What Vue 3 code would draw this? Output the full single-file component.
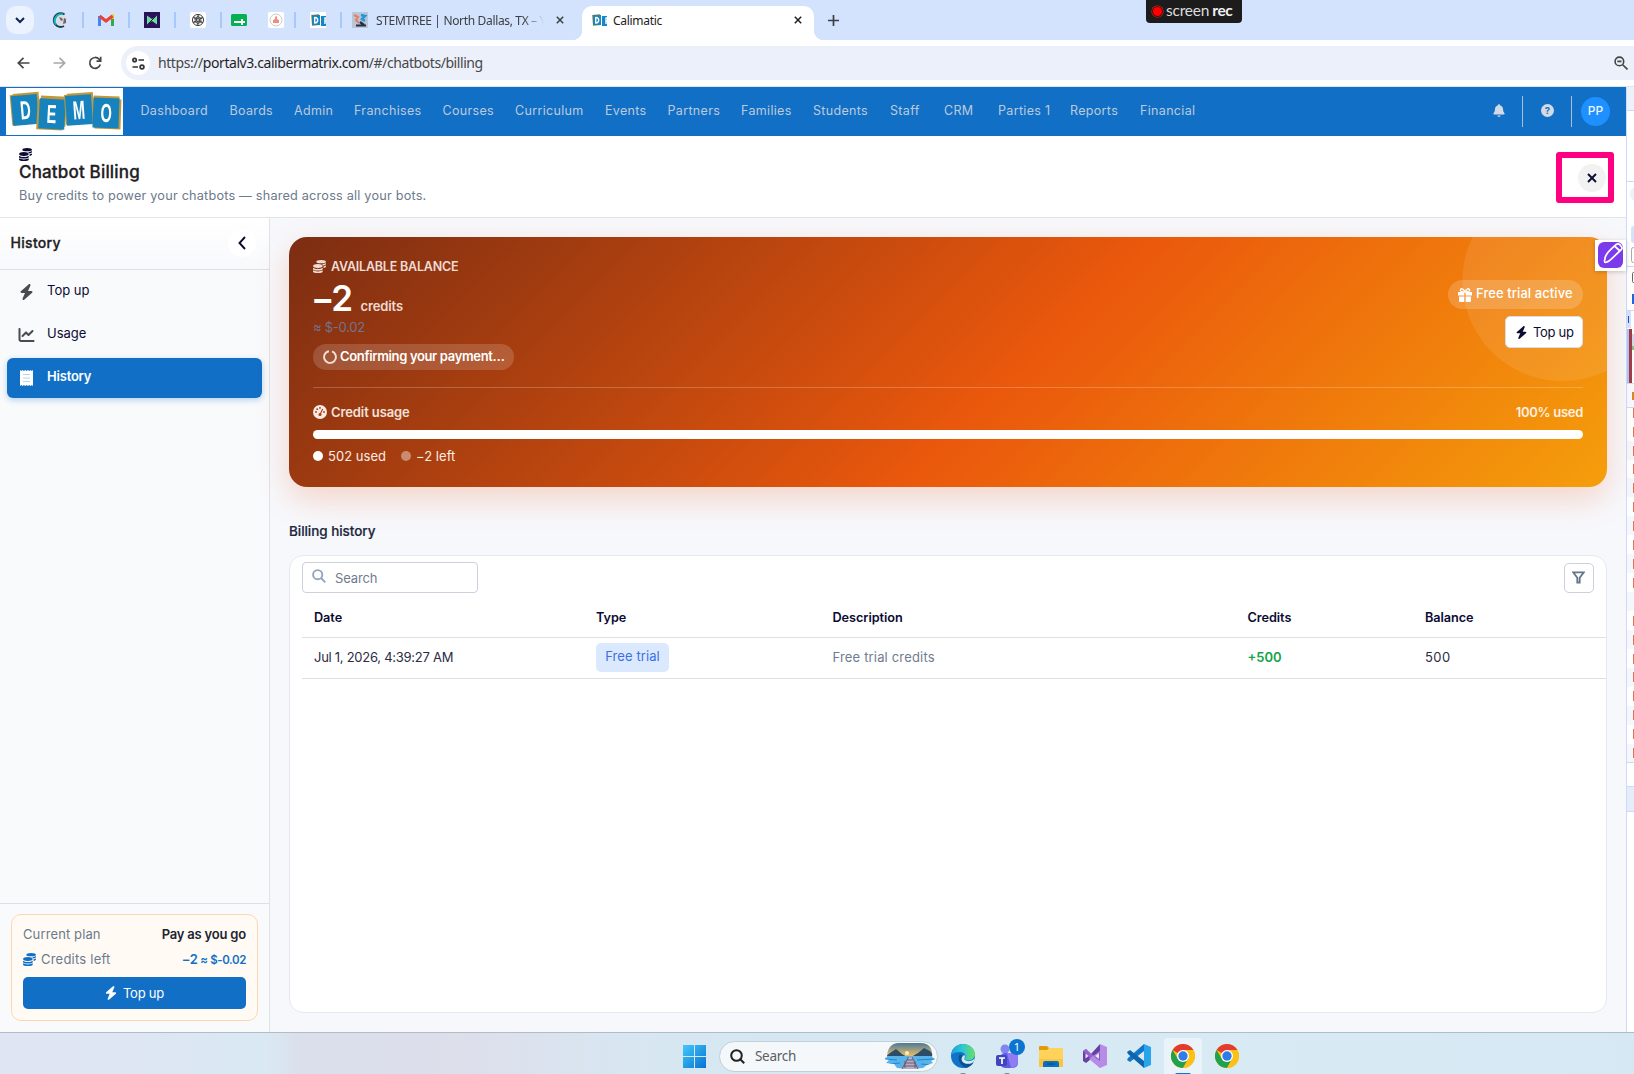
<script setup>
const nav = [
  { t: 'Dashboard', w: 89 }, { t: 'Boards', w: 64.5 }, { t: 'Admin', w: 60 }, { t: 'Franchises', w: 88.5 },
  { t: 'Courses', w: 72.5 }, { t: 'Curriculum', w: 90 }, { t: 'Events', w: 62.5 }, { t: 'Partners', w: 73.5 },
  { t: 'Families', w: 72 }, { t: 'Students', w: 77 }, { t: 'Staff', w: 54 }, { t: 'CRM', w: 54 },
  { t: 'Parties 1', w: 72 }, { t: 'Reports', w: 70 }, { t: 'Financial', w: 60 },
]
const letters = ['D', 'E', 'M', 'O']
const rows = [
  { date: 'Jul 1, 2026, 4:39:27 AM', type: 'Free trial', desc: 'Free trial credits', credits: '+500', balance: '500' },
]
const ticks = [413, 432, 451, 469, 488, 507, 526, 545, 564, 583, 621, 640, 659, 677, 696, 715, 734, 753]
</script>

<template>
  <div class="screen">
    <svg class="defs" width="0" height="0">
      <symbol id="bolt" viewBox="0 0 448 512"><path d="M349.4 44.6c5.9-13.7 1.5-29.7-10.6-38.5s-28.6-8-39.9 1.8l-256 224c-10 8.8-13.6 22.9-8.9 35.3S50.7 288 64 288H175.5L98.6 467.4c-5.9 13.7-1.5 29.7 10.6 38.5s28.6 8 39.9-1.8l256-224c10-8.8 13.6-22.9 8.9-35.3s-16.6-20.7-30-20.7H272.5L349.4 44.6z" /></symbol>
      <symbol id="coins" viewBox="0 0 512 512"><path d="M0 405.3V448c0 35.3 86 64 192 64s192-28.7 192-64v-42.7C342.7 434.4 267.2 448 192 448S41.3 434.4 0 405.3zM320 128c106 0 192-28.7 192-64S426 0 320 0 128 28.7 128 64s86 64 192 64zM0 300.4V352c0 35.3 86 64 192 64s192-28.7 192-64v-51.6c-41.3 34-116.9 51.6-192 51.6S41.3 334.4 0 300.4zm416 11c57.3-11.1 96-31.7 96-55.4v-42.7c-23.2 16.4-57.3 27.6-96 34.5v63.6zM192 160C86 160 0 195.8 0 240s86 80 192 80 192-35.8 192-80-86-80-192-80zm219.3 56.3c60-10.8 100.7-32 100.7-56.3v-42.7c-35.5 25.1-96.5 38.6-160.7 41.8 29.5 14.3 51.2 33.5 60 57.2z" /></symbol>
      <symbol id="cross" viewBox="0 0 10 10"><path d="M1 1l8 8M9 1l-8 8" fill="none" stroke="currentColor" stroke-width="1.9" /></symbol>
      <symbol id="demo-icon" viewBox="0 0 16 16"><path fill="#fff" d="M0 0h16v16H0z" /><path fill="#c39a3a" d="M1 3l8-1 1 11-8 1z" /><path fill="#1687c4" d="M2 3h8v10H2zM11 4h5v10h-5z" /><path d="M4.700 5v6.500M4.700 5.500c4-.5 4 5.500 0 5.500M15 5.500v6.500M14.500 6H16M14.500 9H16" fill="none" stroke="#fff" stroke-width="1.400" /></symbol>
      <symbol id="chrome" viewBox="0 0 24 24"><circle cx="12" cy="12" r="12" fill="#fbc116" /><path fill="#e33b2e" d="M12 12L1.6 6A12 12 0 0 1 22.4 6H12z" /><path fill="#22a04b" d="M12 24A12 12 0 0 1 1.6 6L7 15l5 3 5-3z" /><path fill="#fbc116" d="M12 24a12 12 0 0 0 10.4-18H12l5.2 9z" /><circle cx="12" cy="12" r="6" fill="#fff" /><circle cx="12" cy="12" r="4.7" fill="#2f7bea" /></symbol>
    </svg>

    <!-- browser tabs -->
    <div class="tabs">
      <div class="tab-search"><svg width="10" height="7" viewBox="0 0 10 7"><path d="M1 1l4 4 4-4" fill="none" stroke="#10254f" stroke-width="2" /></svg></div>
      <svg class="fav first" viewBox="0 0 16 16"><path d="M12.500 2.500a6.800 6.800 0 1 0-.5 11.500" fill="none" stroke="#273c49" stroke-width="2" /><path d="M11 2.500a6.500 6.500 0 0 0-7 10" fill="none" stroke="#16b5c5" stroke-width="2" /><circle cx="9.500" cy="8" r="5" fill="#d9dce0" /><path d="M7 5l3 1 1 2-2 1zM12 6l2 1v4l-3 1z" fill="#75665d" /></svg>
      <i class="sep"></i>
      <svg class="fav" viewBox="0 0 16 16"><path fill="#4285f4" d="M0 4h3v10H0z" /><path fill="#34a853" d="M13 4h3v10h-3z" /><path fill="#fbbc04" d="M13 2.5h3V7h-3z" /><path d="M1.5 4L8 9l6.500-5" fill="none" stroke="#ea4335" stroke-width="3.200" /></svg>
      <i class="sep"></i>
      <svg class="fav" viewBox="0 0 16 16"><path fill="#2b1158" d="M0 0h16v16H0z" /><path fill="#66e19a" d="M3 3.500L8 7l5-3.500v9L8 9l-5 3.500z" /><path d="M4 12l8-8" stroke="#2b1158" /></svg>
      <i class="sep"></i>
      <svg class="fav" viewBox="0 0 16 16"><rect width="16" height="16" rx="2" fill="#fff" /><g fill="none" stroke="#444" stroke-width="1"><circle cx="8" cy="8" r="5.600" /><path v-for="a in 6" :key="a" :transform="`rotate(${a * 60} 8 8)`" d="M8 2.500v4l3 1.700v3" /></g></svg>
      <i class="sep"></i>
      <svg class="fav tight" viewBox="0 0 16 16"><rect y="2" width="16" height="12" rx="1.500" fill="#05b050" /><path d="M3 10h11M11 7v6" stroke="#fff" stroke-width="2" /></svg>
      <svg class="fav wide" viewBox="0 0 16 16"><rect width="16" height="16" rx="2" fill="#fff" /><circle cx="8" cy="8" r="6" fill="none" stroke="#bbb" stroke-width=".8" /><path d="M5 11V8l2-1V5l2-1v3l2 1v3z" fill="#f08c80" /></svg>
      <i class="sep short"></i>
      <svg class="fav"><use href="#demo-icon" /></svg>
      <i class="sep"></i>
      <svg class="fav short" viewBox="0 0 16 16"><path fill="#b8c6d6" d="M0 0h16v16H0z" /><path d="M2 3l4 2-2 3 3 3" stroke="#ee7b5d" stroke-width="2" fill="none" /><path d="M9 3l4 1-3 3 3 2" stroke="#2597d4" stroke-width="2.500" fill="none" /><path d="M4 13.500h10M8 10l4 3" stroke="#222e45" stroke-width="2.200" /></svg>
      <div class="tab-title">STEMTREE | North Dallas, TX – Y</div>
      <svg class="x1"><use href="#cross" /></svg>
      <div class="tab-active">
        <svg class="fav"><use href="#demo-icon" /></svg>
        <span>Calimatic</span>
        <svg class="x2"><use href="#cross" /></svg>
      </div>
      <svg class="plus" width="11" height="11" viewBox="0 0 11 11"><path d="M5.500 0v11M0 5.500h11" stroke="#3c4043" stroke-width="1.700" /></svg>
      <div class="rec"><i></i><span>screen</span><b>rec</b></div>
    </div>

    <!-- address bar -->
    <div class="toolbar">
      <svg class="back" width="13" height="12" viewBox="0 0 13 12"><path d="M12.500 6H1.500M6.500 .8L1.300 6l5.200 5.200" fill="none" stroke="#474747" stroke-width="1.700" /></svg>
      <svg class="fwd" width="13" height="12" viewBox="0 0 13 12"><path d="M.5 6h11M6.500 .8L11.700 6l-5.200 5.200" fill="none" stroke="#a8a8a8" stroke-width="1.700" /></svg>
      <svg class="reload" width="14" height="14" viewBox="0 0 14 14"><path d="M12.300 8.500A5.400 5.400 0 1 1 11.200 3.300l1.300 1.500M12.700 .8v4.300H8.500" fill="none" stroke="#474747" stroke-width="1.700" /></svg>
      <div class="omni">
        <div class="site"><svg width="13" height="13" viewBox="0 0 13 13"><g fill="none" stroke="#333" stroke-width="1.700"><circle cx="2.600" cy="3" r="1.700" /><path d="M6.500 3H12M.5 10H6" /><circle cx="10" cy="10" r="1.900" /></g></svg></div>
        <div class="url"><span>https://</span>portalv3.calibermatrix.com<span>/#/chatbots/billing</span></div>
        <svg class="zoomout" width="14" height="14" viewBox="0 0 14 14"><g fill="none" stroke="#444" stroke-width="1.600"><circle cx="5.400" cy="5.400" r="4.300" /><path d="M8.700 8.700l4.800 4.800M3.300 5.400h4.200" /></g></svg>
      </div>
    </div>

    <div class="window">
      <div class="page">
        <!-- application bar -->
        <div class="appbar">
          <div class="logo"><div v-for="(l, i) in letters" :key="l" class="tile" :class="'t' + i"><span>{{ l }}</span></div></div>
          <div class="nav"><span v-for="n in nav" :key="n.t" :style="{ width: n.w + 'px' }">{{ n.t }}</span></div>
          <svg class="bell" width="12" height="13" viewBox="0 0 448 512"><path fill="#d3dae4" d="M224 0c-17.700 0-32 14.300-32 32V51.200C119 66 64 130.600 64 208v18.800c0 47-17.300 92.400-48.500 127.600l-7.400 8.300c-8.400 9.400-10.400 22.900-5.300 34.400S19.400 416 32 416H416c12.600 0 24-7.400 29.200-18.900s3.100-25-5.300-34.400l-7.400-8.300C401.300 319.200 384 273.900 384 226.800V208c0-77.400-55-142-128-156.800V32c0-17.700-14.300-32-32-32zm45.300 493.300c12-12 18.700-28.300 18.700-45.300H160c0 17 6.700 33.300 18.700 45.300s28.300 18.700 45.300 18.700s33.300-6.700 45.300-18.700z" /></svg>
          <i class="bar"></i>
          <div class="help">?</div>
          <i class="bar"></i>
          <div class="avatar">PP</div>
        </div>

        <!-- page heading -->
        <div class="head">
          <div class="head-text">
            <svg class="coin13"><use href="#coins" /></svg>
            <h1>Chatbot Billing</h1>
            <p>Buy credits to power your chatbots — shared across all your bots.</p>
          </div>
          <div class="mark"><div class="close"><svg width="10" height="10"><use href="#cross" /></svg></div></div>
        </div>

        <div class="body">
          <div class="side">
            <div class="side-head"><b>History</b><div class="collapse"><svg width="8" height="14" viewBox="0 0 8 14"><path d="M7 1L1.500 7 7 13" fill="none" stroke="#0b0b28" stroke-width="1.900" /></svg></div></div>
            <div class="menu">
              <div class="item"><svg width="16" height="16"><use href="#bolt" /></svg><span>Top up</span></div>
              <div class="item"><svg width="17" height="16" viewBox="0 0 512 512"><path d="M64 64c0-17.700-14.300-32-32-32S0 46.300 0 64V400c0 44.200 35.800 80 80 80H480c17.700 0 32-14.300 32-32s-14.300-32-32-32H80c-8.800 0-16-7.200-16-16V64zm406.600 86.600c12.500-12.500 12.500-32.800 0-45.300s-32.800-12.500-45.300 0L320 210.700l-57.400-57.400c-12.500-12.500-32.800-12.500-45.300 0l-112 112c-12.500 12.500-12.500 32.800 0 45.300s32.800 12.500 45.300 0L240 221.300l57.400 57.400c12.500 12.500 32.800 12.500 45.300 0l128-128z" /></svg><span>Usage</span></div>
              <div class="item on"><svg width="16" height="16" viewBox="0 0 16 16"><path fill="#fff" d="M1.500 0l1.200 1L4 0l1.400 1L6.700 0 8 1 9.300 0l1.400 1L12 0l1.300 1 1.200-1v16l-1.200-1-1.300 1-1.300-1-1.400 1L8 15l-1.300 1-1.300-1L4 16l-1.300-1-1.200 1z" /><path d="M4.500 4.500h7M4.500 8h7M4.500 11.500h7" stroke="#b9d3ec" stroke-width="1.200" /></svg><span>History</span></div>
            </div>
            <div class="side-foot">
              <div class="plan">
                <div class="pr"><span>Current plan</span><b>Pay as you go</b></div>
                <div class="pr second"><svg class="coin13"><use href="#coins" /></svg><span>Credits left</span><strong>−2 <small>≈ $-0.02</small></strong></div>
                <div class="buy"><svg width="12" height="14"><use href="#bolt" /></svg><span>Top up</span></div>
              </div>
            </div>
          </div>

          <div class="main">
            <div class="hero">
              <div class="hero-top">
                <div class="bal">
                  <div class="cap"><svg class="coin13"><use href="#coins" /></svg>AVAILABLE BALANCE</div>
                  <div class="num"><b>−2</b><span>credits</span></div>
                  <div class="approx">≈ $-0.02</div>
                  <div class="confirm"><svg width="14" height="14" viewBox="0 0 14 14"><circle cx="7" cy="7" r="5.900" fill="none" stroke="#f4dfd6" stroke-width="1.900" stroke-dasharray="33 4.070" transform="rotate(-70 7 7)" /></svg><span>Confirming your payment…</span></div>
                </div>
                <div class="acts">
                  <div class="trial"><svg width="14" height="14" viewBox="0 0 14 14"><path fill="#fff" d="M0 4h6.300v3.500H0zM7.700 4H14v3.500H7.700zM1 8.500h5.300V14H2a1 1 0 0 1-1-1zM7.700 8.500H13V13a1 1 0 0 1-1 1H7.700z" /><path d="M6.800 4C3 4 1.800 3 2.600 1.500S6 1 6.800 4zM7.200 4c3.800 0 5-1 4.200-2.500S8 1 7.200 4z" fill="none" stroke="#fff" stroke-width="1.300" /></svg><span>Free trial active</span></div>
                  <div class="topup"><svg width="13" height="13"><use href="#bolt" /></svg><span>Top up</span></div>
                </div>
              </div>
              <div class="usage"><svg width="14" height="14" viewBox="0 0 14 14"><circle cx="7" cy="7" r="7" fill="#f8e9e2" /><g fill="#a63f13"><circle cx="3" cy="7" r=".9" /><circle cx="4.200" cy="4.200" r=".9" /><circle cx="7" cy="2.900" r=".9" /><circle cx="11" cy="7" r=".9" /><circle cx="7" cy="9.500" r="1.500" /></g><path d="M7 9.500l2.700-5.500" stroke="#a63f13" stroke-width="1.100" /></svg><span>Credit usage</span><b>100% used</b></div>
              <div class="track"></div>
              <div class="legend"><i></i><span>502 used</span><i class="dim"></i><span>−2 left</span></div>
            </div>
            <h2>Billing history</h2>
            <div class="panel">
              <div class="tools">
                <div class="search"><svg width="14" height="14" viewBox="0 0 14 14"><g fill="none" stroke="#94a3bf" stroke-width="1.900"><circle cx="5.700" cy="5.700" r="4.600" /><path d="M9 9l4.300 4.300" /></g></svg><span>Search</span></div>
                <div class="filter"><svg width="13" height="13" viewBox="0 0 13 13"><path d="M1.200 1.300h10.600L7.700 6.700v4.800H5.300V6.700z" fill="none" stroke="#64748b" stroke-width="1.800" /></svg></div>
              </div>
              <div class="row th"><span>Date</span><span>Type</span><span>Description</span><span>Credits</span><span>Balance</span></div>
              <div v-for="r in rows" :key="r.date" class="row td"><span class="date">{{ r.date }}</span><span class="type"><em>{{ r.type }}</em></span><span class="desc">{{ r.desc }}</span><span class="added">{{ r.credits }}</span><span class="total">{{ r.balance }}</span></div>
            </div>
          </div>
        </div>
        <div class="pen"><svg width="25" height="26" viewBox="0 0 25 26"><rect width="25" height="26" rx="6" fill="#7c3aed" /><path d="M6.500 19c0-6 4-9.500 11-16 1.500-1.300 3-1.500 4.300-.3l1.700 2c1 1.200.6 2.300-.6 3.300C15 15 12 20 7.500 20.500 6.800 20.500 6.500 20 6.500 19zM16.500 4l5.500 5" fill="none" stroke="#fff" stroke-width="1.700" /></svg></div>
      </div>

      <!-- sliver of the docked panel -->
      <svg class="dock" width="8" height="945" viewBox="0 87 8 945">
        <path fill="#fff" d="M0 87h8v945H0z" /><path fill="#edf1fa" d="M0 87h8v23H0z" />
        <circle cx="12" cy="194" r="8" fill="#edf1fa" /><rect x="5" y="226" width="9" height="17" rx="3" fill="#d3e3fd" /><rect x="5.500" y="247.500" width="9" height="15" rx="2" fill="#fff" stroke="#aaa" /><rect x="6.500" y="272.500" width="9" height="10" rx="1" fill="#fff" stroke="#666" />
        <path fill="#1b66e5" d="M6 294h2v10H6z" /><path fill="#d3e3fd" d="M0 311h5v17H0z" /><path d="M2.500 316v7" stroke="#0b57d0" />
        <path fill="#a8c7fa" d="M0 329h4v54H0z" /><path fill="#a33a48" d="M3 329h3v54H3z" /><path fill="#cde" d="M6 334h2v16H6z" /><path fill="#7c7" d="M6 346h2v4H6z" />
        <path fill="#f8f9fe" d="M0 384h8v23H0z" /><path fill="#d78a22" d="M6 392h2v8H6z" />
        <path fill="#f5f7fc" d="M0 441h8v19H0zM0 478h8v19H0zM0 516h8v19H0zM0 554h8v19H0zM0 592h8v19H0zM0 630h8v19H0zM0 668h8v19H0zM0 706h8v19H0zM0 744h8v19H0z" />
        <path v-for="y in ticks" :key="y" :d="`M7.500 ${y - 5}v10`" stroke="#de7651" />
        <path fill="#e5edfb" d="M0 786h8v25H0z" />
        <path d="M0 110.500h8M0 181.500h8M0 266.500h8M0 310.500h8M0 383.500h8M0 407.500h8M0 762.500h8M0 786.500h8M0 811.500h8M.5 87v945" stroke="#cbdcf9" />
      </svg>
    </div>

    <!-- desktop taskbar -->
    <div class="taskbar">
      <svg class="win" width="23" height="23" viewBox="0 0 23 23"><defs><linearGradient id="wg" x2="1" y2="1"><stop stop-color="#43c8fa" /><stop offset="1" stop-color="#0672d2" /></linearGradient></defs><path fill="url(#wg)" d="M0 0h11v11H0zM12 0h11v11H12zM0 12h11v11H0zM12 12h11v11H12z" /></svg>
      <div class="tsearch"><svg width="15" height="15" viewBox="0 0 15 15"><g fill="none" stroke="#222" stroke-width="2"><circle cx="6.500" cy="6.500" r="5.300" /><path d="M10.200 10.200l4 4" /></g></svg><span>Search</span>
        <svg class="scene" width="50" height="26" viewBox="0 0 50 26"><defs><clipPath id="sc"><path d="M2 14C2 6 6 0 14 0h22c9 0 12 7 11 14l3 2-4 2 2 2-6 2-4 3-14 1-12-1-3-4-8-1 3-3-5-1z" /></clipPath><linearGradient id="sky" x2="0" y2="1"><stop stop-color="#4c7a96" /><stop offset="1" stop-color="#f5c469" /></linearGradient></defs><g clip-path="url(#sc)"><path fill="url(#sky)" d="M0 0h50v14H0z" /><path fill="#2c4c68" d="M0 14l5-4 6-4 6 5 5 3zM50 14l-5-6-6-3-6 5-7 4z" /><path fill="#58b3ea" d="M0 13h50v13H0z" /><path d="M0 16l12 1M32 17l18-1M4 21l11-1M36 21l12 1" stroke="#2485cb" /><circle cx="22" cy="10" r="2" fill="#fff0af" /></g><path fill="#b5aecb" d="M24 14h3l6 12H17z" /><path d="M23.500 14L17 26M27 14l6 12M20 18v7M30 18v7M22 17h6M20 20h10M19 23h13" stroke="#6b5a68" /></svg>
      </div>
      <div class="app"><svg width="24" height="24" viewBox="0 0 24 24"><defs><linearGradient id="eg" x1="0" x2="1"><stop stop-color="#1a9ee2" /><stop offset=".5" stop-color="#31c8d0" /><stop offset="1" stop-color="#6ade62" /></linearGradient></defs><circle cx="12" cy="12" r="12" fill="#0f73c9" /><path fill="url(#eg)" d="M0 11C1 4 6 0 12 0c7 0 12 5 12 10 0 4-3 6.500-6.500 6.500-3 0-4.500-1.300-3.500-2.500 2-3-1-6-5-6-4 0-7 1-9 3z" /><path fill="#0d4f94" d="M9 10c-3 4-1 11 6 14 3-.8 6-2.600 7.500-5.500-4 2-9 1.500-11-1-1.500-2-1.500-4-.5-6z" /><path fill="#d9ecf6" d="M13.500 11c1 1.500 0 3-.3 4 .8 2 4 2.600 7 1.800 1.800-.5 2.500-1.300 3.300-2.800 0 3-1 4-3 5.200-4 1.300-8 .5-9.500-2.200-1-2 0-5 2.500-6z" /></svg><i></i></div>
      <div class="app"><svg width="24" height="24" viewBox="0 0 24 24"><circle cx="10" cy="5" r="4.500" fill="#8185f1" /><circle cx="18" cy="6" r="3" fill="#6670e8" /><rect x="5" y="9" width="18" height="15" rx="5" fill="#5b5fe8" /><path fill="#8f7cf5" d="M12 9h9a2 2 0 0 1 2 2v6c0 4-3 7-7 7z" /><rect x="1" y="11" width="11" height="11" rx="2" fill="#4145bb" /><path d="M4 14h6M7 14v6" stroke="#fff" stroke-width="1.700" /></svg><b>1</b><i></i></div>
      <div class="app"><svg width="24" height="24" viewBox="0 0 24 24"><path fill="#e09b0b" d="M0 3a1 1 0 0 1 1-1h7l2 2h13v5H0z" /><path fill="#ffd25a" d="M0 6h8l2-2h13a1 1 0 0 1 1 1v18H0z" /><path fill="#f7bc2e" d="M0 15h24v8H0z" opacity=".6" /><path fill="#0b6fbe" d="M4 23v-4a2 2 0 0 1 2-2h12a2 2 0 0 1 2 2v4z" /><path d="M8 20h8" stroke="#074b86" /></svg></div>
      <div class="app"><svg width="24" height="24" viewBox="0 0 24 24"><path fill="#6a3fa0" d="M0 7l3-2 5 5 9-10v8L3 19l-3-2z" /><path fill="#a46ad7" d="M3 5l14 12V24L0 7z" opacity=".8" /><path fill="#b78ce8" d="M17 0l7 3v18l-7 3-11-9 11-8z" /><path fill="#8658bc" d="M17 8v9l-6-4.500z" /><path fill="#d9ecf6" d="M16 9v6l-4-3zM2.500 9.500l3 2.500-3 2.500z" /></svg></div>
      <div class="app"><svg width="24" height="24" viewBox="0 0 24 24"><path fill="#1476c4" d="M17 0v7L3 18l-3-2 1-2z" /><path fill="#0c65ad" d="M17 24v-7L3 6 0 8l1 2z" /><path fill="#29a5ee" d="M17 0l7 3v18l-7 3z" /></svg></div>
      <div class="app cur"><svg width="24" height="24"><use href="#chrome" /></svg><i></i></div>
      <div class="app"><svg width="24" height="24"><use href="#chrome" /></svg></div>
    </div>
  </div>
</template>

<style>
body { margin: 0; overflow: hidden; }
</style>

<style scoped>
* { box-sizing: border-box; }
.screen { width: 1634px; height: 1074px; display: flex; flex-direction: column; overflow: hidden; font-family: Inter, "Liberation Sans", sans-serif; font-size: 13px; color: #0b0b33; background: #fff; white-space: nowrap; }
.screen svg { display: block; flex: none; }
.defs { position: absolute; }
.tabs { height: 40px; flex: none; background: #d3e2fd; display: flex; align-items: center; position: relative; font-family: "Noto Sans", sans-serif; font-size: 12px; color: #3c4043; }
.tab-search { width: 28px; height: 28px; margin-left: 6px; border-radius: 10px; background: #edf3fe; display: flex; align-items: center; justify-content: center; }
.fav { width: 16px; height: 16px; margin-left: 14px; }
.fav.first { margin-left: 18px; }
.fav.tight { margin-left: 9px; }
.fav.wide { margin-left: 21px; }
.sep { width: 2px; height: 16px; margin-left: 14px; background: #a8c7fa; flex: none; }
.sep.short, .fav.short { margin-left: 10px; }
.tab-title { margin-left: 8px; width: 168px; overflow: hidden; letter-spacing: -.34px; -webkit-mask-image: linear-gradient(90deg, #000 148px, transparent 168px); mask-image: linear-gradient(90deg, #000 148px, transparent 168px); }
.x1 { width: 8px; height: 8px; margin-left: 12px; }
.tab-active { margin-left: 18px; width: 232px; height: 34px; align-self: flex-end; background: #fff; border-radius: 10px 10px 0 0; display: flex; align-items: center; padding: 0 12px 6px 9px; color: #222; position: relative; letter-spacing: -.3px; }
.tab-active::before, .tab-active::after { content: ""; position: absolute; bottom: 0; width: 10px; height: 10px; left: -10px; background: radial-gradient(circle at 0 0, transparent 10px, #fff 10.500px); }
.tab-active::after { left: auto; right: -10px; background: radial-gradient(circle at 100% 0, transparent 10px, #fff 10.500px); }
.tab-active .fav { margin: 0 7px 0 0; }
.tab-active .fav { margin-left: 0; margin-right: 6px; }
.x2 { width: 8px; height: 8px; margin-left: auto; }
.plus { margin-left: 14px; }
.rec { position: absolute; left: 1146px; top: 0; width: 96px; height: 23px; border-radius: 0 0 4px 4px; background: #1c1c1c; color: #ddd; display: flex; align-items: center; padding: 0 0 3px 7px; font-family: Lato, sans-serif; font-size: 15.500px; letter-spacing: -.2px; }
.rec i { width: 9px; height: 9px; border-radius: 50%; background: red; box-shadow: 0 0 0 1px #500, 0 0 0 1.500px #e33; margin: 2px 4px 0 0; }
.rec b { margin-left: 3px; color: #eee; letter-spacing: -.4px; }
.toolbar { height: 47px; flex: none; background: #fff; border-bottom: 1px solid #dfe2e8; display: flex; align-items: center; }
.back { margin-left: 17px; }
.fwd { margin-left: 22.500px; }
.reload { margin-left: 22.500px; }
.omni { margin-left: 19px; flex: 1; height: 34px; border-radius: 17px 0 0 17px; background: #ecf0fa; display: flex; align-items: center; padding-left: 5px; }
.site { width: 24px; height: 24px; border-radius: 50%; background: #fff; display: flex; align-items: center; justify-content: center; }
.url { margin: 0 0 1px 8px; font: 14px "Noto Sans", sans-serif; letter-spacing: -.43px; color: #1f1f1f; }
.url span { color: #474747; }
.zoomout { margin: 0 6px 0 auto; }
.window { display: flex; height: 945px; flex: none; }
.page { width: 1626px; display: flex; flex-direction: column; position: relative; }
.dock { width: 8px; }
.appbar { height: 49px; flex: none; background: #126fc6; display: flex; align-items: center; }
.logo { width: 117px; height: 47px; margin-left: 6px; background: #fff; display: flex; padding: 7px 6px; gap: 1px; }
.tile { width: 26px; height: 30px; flex: none; background: #1683be; box-shadow: -1px -1px 0 #c29839, 2px -2px 0 #c29839; color: #fff; display: flex; align-items: center; justify-content: center; font: 700 26px "Liberation Sans", sans-serif; transform: rotate(-5deg); }
.tile span { transform: scaleX(.56); }
.t1 { transform: translateY(4px) rotate(3deg); box-shadow: 1px -3px 0 #c29839, -2px 1px 0 #c29839; }
.t2 { transform: rotate(-4deg); }
.t3 { transform: translateY(3px) rotate(2deg); box-shadow: 0 -2px 0 #c29839, 2px 1px 0 #c29839; }
.nav { display: flex; margin-left: 17.500px; padding-bottom: 2px; color: #bccbdc; font-size: 12.500px; letter-spacing: .33px; }
.nav span { flex: none; }
.bell { margin-left: auto; margin-bottom: 3px; }
.bar { width: 1px; height: 31px; background: #a7bfd8; margin-left: 17px; }
.help { width: 13px; height: 13px; margin: 0 0 3px 18px; border-radius: 50%; background: #d3dae4; color: #126fc6; font-size: 9.500px; font-weight: 700; line-height: 13px; text-align: center; }
.avatar { width: 29px; height: 29px; margin: 0 16px 0 9px; border-radius: 50%; background: #1e90ff; color: #eef5fc; display: flex; align-items: center; justify-content: center; font-size: 12px; font-weight: 500; padding-bottom: 2px; }
.head { height: 82px; flex: none; border-bottom: 1px solid #e2e4e8; background: #fff; display: flex; justify-content: space-between; padding: 12px 12px 0 19px; }
.coin13 { width: 13px; height: 13px; fill: currentColor; }
.head h1 { margin: 0; font-size: 17px; line-height: 22px; font-weight: 500; color: #1f2024; letter-spacing: .17px; -webkit-text-stroke: .3px; }
.head p { margin: 5px 0 0; line-height: 16px; font-size: 12.700px; letter-spacing: .2px; color: #6c7a8c; }
.mark { width: 58px; height: 51px; margin-top: 4px; border: 6px solid #ff0080; border-radius: 3px; padding: 6px 0 0 16px; }
.close { width: 28px; height: 28px; border-radius: 50%; background: #f2f2f2; display: flex; align-items: center; justify-content: center; }
.body { flex: 1; min-height: 0; display: flex; }
.side { width: 270px; flex: none; border-right: 1px solid #e0e3e8; background: #f9fafc; display: flex; flex-direction: column; }
.side-head { height: 52px; border-bottom: 1px solid #dcdfe3; background: linear-gradient(#fff, #f8f9fb); display: flex; align-items: center; justify-content: space-between; padding: 0 13px 2px 10.500px; }
.side-head b { font-size: 14px; font-weight: 500; color: #1f2024; letter-spacing: .3px; -webkit-text-stroke: .3px; }
.collapse { width: 28px; height: 28px; border-radius: 50%; background: #fff; display: flex; align-items: center; justify-content: center; }
.menu { padding: 2px 7px 0; display: flex; flex-direction: column; gap: 3px; }
.item { height: 40px; border-radius: 6px; display: flex; align-items: center; padding-left: 11px; fill: #4a4a4f; letter-spacing: 0; }
.item svg { width: 17px; }
.item span { margin: 0 0 4px 12px; }
.item.on { background: #126fc6; color: #fff; font-weight: 600; letter-spacing: -.2px; box-shadow: 0 2px 6px rgba(18, 111, 198, .3); }
.side-foot { margin-top: auto; height: 129px; border-top: 1px solid #dcdfe3; padding: 10px 11px; }
.plan { height: 107px; border: 1px solid #fdd7b0; border-radius: 10px; background: #fffaf4; padding: 10px 11px 0; }
.pr { height: 18px; display: flex; align-items: center; color: #6c7a8c; letter-spacing: .12px; }
.pr b { margin-left: auto; font-weight: 600; color: #1c2430; letter-spacing: -.2px; }
.pr.second { margin-top: 7px; letter-spacing: .22px; }
.pr .coin13 { color: #126fc6; margin: 0 5px 0 0; }
.pr strong { margin-left: auto; font-weight: 600; color: #126fc6; letter-spacing: -.4px; }
.pr small { font-size: 11.500px; }
.buy { height: 32px; margin-top: 9px; border-radius: 5px; background: #126fc6; color: #fff; fill: #fff; display: flex; align-items: center; justify-content: center; gap: 6px; letter-spacing: -.2px; }
.buy span { margin-bottom: 1px; }
.main { flex: 1; min-width: 0; background: #f7f8fc; padding: 19px 19px 0; }
.hero { height: 250px; border-radius: 18px; background: linear-gradient(135deg, #7c2d12, #ea580c 55%, #f59e0b); box-shadow: 0 12px 32px rgba(234, 88, 12, .22); position: relative; padding: 20px 24px 0; color: #fff; }
.hero::before { content: ""; position: absolute; inset: 0; border-radius: 18px; background: radial-gradient(circle at 1273.500px 44px, rgba(255, 255, 255, .09) 99.500px, transparent 100.500px); }
.hero-top { height: 131px; border-bottom: 1px solid rgba(255, 255, 255, .22); display: flex; justify-content: space-between; position: relative; }
.cap { height: 18px; display: flex; align-items: center; gap: 5px; color: #f0dcd4; font-size: 12.500px; font-weight: 600; letter-spacing: -.2px; }
.num { height: 42px; display: flex; align-items: baseline; gap: 10px; }
.num b { font-size: 35px; line-height: 46px; font-weight: 600; letter-spacing: -2.500px; margin-left: -2px; }
.num span { font-weight: 600; color: #f0dcd4; letter-spacing: -.1px; }
.approx { height: 20px; line-height: 20px; color: #75738a; letter-spacing: -.25px; }
.confirm { width: 201px; height: 26px; margin-top: 7px; border-radius: 13px; background: rgba(255, 255, 255, .16); display: flex; align-items: center; padding-left: 10px; gap: 3px; font-weight: 600; letter-spacing: -.35px; }
.confirm span { margin-bottom: 3px; }
.acts { display: flex; flex-direction: column; align-items: flex-end; padding-top: 23px; }
.trial { width: 135px; height: 29px; border-radius: 15px; background: rgba(255, 255, 255, .18); display: flex; align-items: center; gap: 4px; padding-left: 10px; font-weight: 500; letter-spacing: .08px; }
.trial span { margin-bottom: 4px; }
.topup { width: 78px; height: 32px; margin-top: 7px; border-radius: 5px; background: #fff; border: 1px solid #dbdde3; color: #0b0b33; fill: #0b0b33; display: flex; align-items: center; gap: 5px; padding-left: 9px; letter-spacing: -.3px; }
.topup span { margin-bottom: 1px; }
.usage { position: relative; display: flex; align-items: center; height: 20px; margin-top: 14px; gap: 4px; font-weight: 600; color: #f4e2da; letter-spacing: -.1px; }
.usage b { margin-left: auto; font-weight: 600; color: #fff0e0; letter-spacing: -.3px; }
.track { position: relative; height: 9px; margin-top: 8px; border-radius: 5px; background: #fff; }
.legend { position: relative; display: flex; align-items: center; height: 20px; margin-top: 7px; color: #fbece4; letter-spacing: .03px; }
.legend i { width: 10px; height: 10px; border-radius: 50%; background: #fff; margin-right: 5px; }
.legend i.dim { margin-left: 15px; background: rgba(255, 255, 255, .4); }
h2 { margin: 34px 0 0; height: 20px; line-height: 20px; font-size: 13.500px; font-weight: 500; color: #1c2740; letter-spacing: -.05px; -webkit-text-stroke: .2px; }
.panel { height: 458px; margin-top: 14px; border: 1px solid #e5e8f0; border-radius: 14px; background: #fff; padding: 6px 0 0 12px; }
.tools { display: flex; justify-content: space-between; padding-right: 12px; }
.search { width: 176px; height: 31px; border: 1px solid #cbd0da; border-radius: 4px; display: flex; align-items: center; padding-left: 9px; color: #6f7c8f; gap: 9px; letter-spacing: -.15px; }
.search svg { margin-bottom: 3px; }
.filter { width: 30px; height: 30px; margin-top: 1px; border: 1px solid #cbd0da; border-radius: 5px; display: flex; align-items: center; justify-content: center; padding: 0 1px 1px 0; }
.row { display: grid; grid-template-columns: 282px 236.500px 415px 177.500px 1fr; align-items: center; padding-left: 12px; border-bottom: 1px solid #dee0e3; }
.th { height: 45px; font-weight: 600; font-size: 12.700px; letter-spacing: -.05px; }
.th span { margin-bottom: -4px; }
.td { height: 41px; color: #2c2c45; padding-bottom: 2px; }
.td .date { letter-spacing: -.27px; }
.td em { display: flex; align-items: center; justify-content: center; width: 73px; height: 29px; background: #dbe9fe; color: #3b6fe8; border-radius: 5px; font-style: normal; padding-bottom: 2px; letter-spacing: .1px; }
.td .desc { color: #6f7c8f; letter-spacing: .17px; }
.td .added { color: #17a34a; font-weight: 600; }
.td .total { letter-spacing: .4px; }
.pen { position: absolute; right: 0; top: 153px; width: 31px; height: 31px; background: #fff; padding: 2px 3px; box-shadow: 0 1px 4px rgba(0, 0, 0, .2); }
.taskbar { height: 42px; flex: none; border-top: 1px solid #b3bcc6; background: linear-gradient(90deg, #e0e5f3, #dee6f3 130px, #d9e9f3 265px, #dadfeb 300px, #dddfeb 460px, #d8e6f1 620px, #d5e8f2 760px, #d8ebf5 1200px, #d5e8f3); display: flex; align-items: center; padding: 5px 0 0 683px; font-family: "Noto Sans", sans-serif; }
.tsearch { width: 219px; height: 31px; margin-left: 13px; border: 1px solid #c3cfd9; border-radius: 16px; background: #f4f8fb; display: flex; align-items: center; padding: 0 2px 0 10px; color: #5c5f63; font-size: 13.500px; letter-spacing: -.3px; }
.tsearch span { margin-left: 10px; }
.scene { margin-left: auto; }
.app { width: 38px; height: 37px; margin-left: 6px; flex: none; position: relative; display: flex; align-items: center; justify-content: center; }
.app i { position: absolute; bottom: 0; left: 16px; width: 6px; height: 2px; border-radius: 2px 2px 0 0; background: #7f8b93; }
.app b { position: absolute; left: 21px; top: 1px; width: 16px; height: 16px; border-radius: 50%; background: #0a74cf; color: #fff; font: 11px/16px "Noto Sans", sans-serif; text-align: center; }
.cur { background: #ebf3fa; border-radius: 4px 4px 0 0; }
.cur i { left: 11px; width: 16px; background: #0a74cf; }
</style>
